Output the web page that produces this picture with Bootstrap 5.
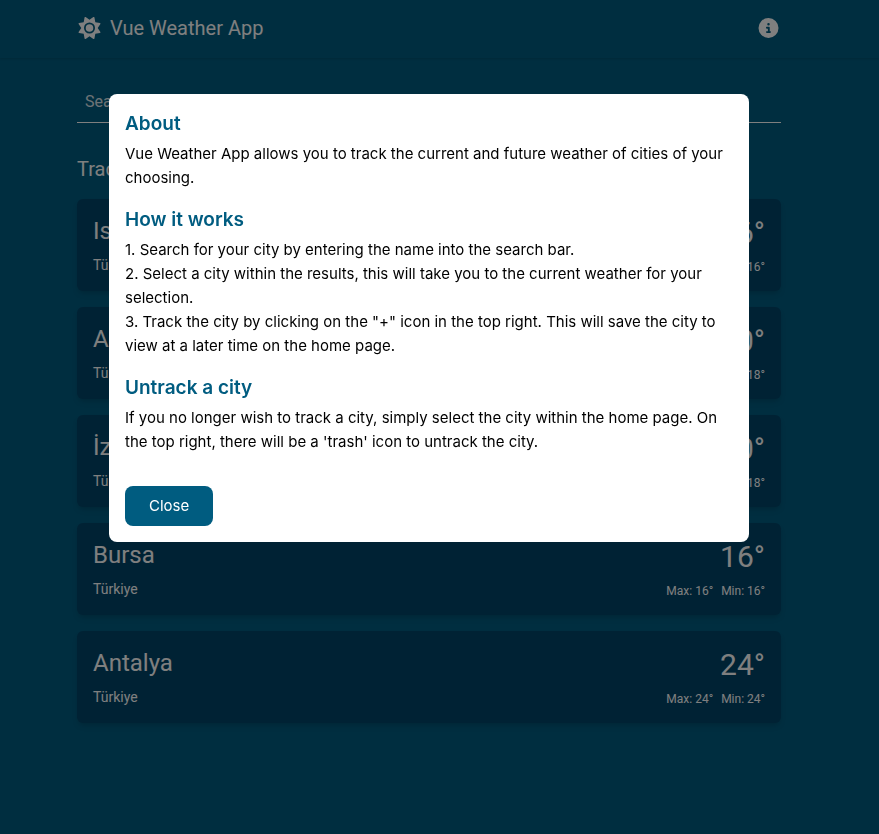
<!DOCTYPE html>
<html lang="en">
<head>
<meta charset="utf-8">
<meta name="viewport" content="width=device-width, initial-scale=1">
<title>Vue Weather App</title>
<link href="https://cdn.jsdelivr.net/npm/bootstrap@5.3.0/dist/css/bootstrap.min.css" rel="stylesheet">
<style>
:root { --sky: #005c80; --deep: #004468; }
body { min-height: 100vh; padding-right: 21px; background: var(--sky); color: #fff; font-family: Roboto, sans-serif; }
.page-width { max-width: 768px; padding-left: 32px; padding-right: 32px; }
.site-header { padding: 14px 0 16px; margin-right: -21px; padding-right: 21px; box-shadow: 0 1px 2px rgba(0,0,0,.12); }
.brand-link { font-size: 20px; line-height: 28px; font-weight: 400; }
.search-input, .search-input:focus { background: transparent; border: 0; border-bottom: 1px solid #fff; border-radius: 0; color: #fff; padding: 8px; line-height: 24px; box-shadow: none; }
.search-input::placeholder { color: #fff; opacity: .85; }
.list-title { font-size: 20px; line-height: 28px; font-weight: 400; margin: 32px 0 16px; }
.city-card { background: var(--deep); border-radius: 6px; padding: 16px; box-shadow: 0 4px 6px -1px rgba(0,0,0,.1), 0 2px 4px -2px rgba(0,0,0,.1); }
.city-name { font-size: 24px; line-height: 32px; font-weight: 400; }
.city-country { font-size: 14px; line-height: 20px; }
.city-temp { font-size: 30px; line-height: 36px; }
.city-range { font-size: 12px; line-height: 16px; }
.overlay { background: rgba(0,0,0,.5); padding: 94px 21px 32px 0; }
.about-box { max-width: 640px; padding: 16px; border-radius: 8px; border: 0; color: #000; font-family: Inter, sans-serif; font-size: 15px; line-height: 24px; }
.about-title { color: var(--sky); font-size: 19px; line-height: 28px; font-weight: 600; }
.close-btn, .close-btn:hover { background: var(--sky); color: #fff; border: 0; border-radius: 8px; padding: 8px 24px; margin-top: 32px; font-size: 15px; line-height: 24px; }
</style>
</head>
<body>
<header class="site-header">
  <nav class="container page-width d-flex align-items-center justify-content-between" aria-label="Main">
    <a href="#" class="brand-link d-flex align-items-center text-white text-decoration-none">
      <svg class="me-2" width="25" height="22" viewBox="0 0 512 512" fill="#fff" aria-hidden="true"><path d="M361.500 1.200c5 2.100 8.600 6.600 9.600 11.900L391 121l107.900 19.800c5.300 1 9.800 4.600 11.900 9.600s1.500 10.700-1.600 15.200L446.900 256l62.300 90.300c3.100 4.500 3.700 10.200 1.600 15.200s-6.600 8.600-11.900 9.600L391 391 371.100 498.900c-1 5.300-4.600 9.800-9.600 11.900s-10.700 1.500-15.200-1.600L256 446.900l-90.300 62.300c-4.500 3.100-10.200 3.700-15.200 1.600s-8.600-6.600-9.600-11.900L121 391 13.100 371.100c-5.300-1-9.800-4.600-11.900-9.600s-1.500-10.700 1.600-15.200L65.100 256 2.800 165.700c-3.100-4.500-3.700-10.200-1.600-15.200s6.600-8.600 11.900-9.600L121 121 140.900 13.100c1-5.300 4.600-9.800 9.600-11.900s10.700-1.500 15.200 1.600L256 65.100 346.300 2.800c4.500-3.100 10.200-3.700 15.200-1.600zM168 256a88 88 0 1 1 176 0 88 88 0 1 1-176 0zm216 0a128 128 0 1 0-256 0 128 128 0 1 0 256 0z"/></svg>
      Vue Weather App
    </a>
    <button type="button" class="btn p-0 border-0 d-flex" aria-label="About this app">
      <svg width="25" height="20" viewBox="0 0 512 512" fill="#fff" aria-hidden="true"><path d="M256 512A256 256 0 1 0 256 0a256 256 0 1 0 0 512zM216 336h24V272H216c-13.300 0-24-10.700-24-24s10.700-24 24-24h48c13.300 0 24 10.700 24 24v88h8c13.300 0 24 10.700 24 24s-10.700 24-24 24H216c-13.300 0-24-10.700-24-24s10.700-24 24-24zm40-208a32 32 0 1 1 0 64 32 32 0 1 1 0-64z"/></svg>
    </button>
  </nav>
</header>
<main class="container page-width pt-4 pb-4">
  <input type="search" class="form-control search-input" placeholder="Search for a city or state" aria-label="Search for a city or state">
  <h2 class="list-title">Tracked Cities</h2>
  <div class="d-flex flex-column gap-3">
    <a href="#" class="city-card d-flex justify-content-between text-white text-decoration-none">
      <div class="d-flex flex-column gap-2"><h3 class="city-name m-0">Istanbul</h3><span class="city-country">Türkiye</span></div>
      <div class="d-flex flex-column gap-2 text-end"><span class="city-temp">16°</span><span class="city-range d-flex gap-2"><span>Max: 16°</span><span>Min: 16°</span></span></div>
    </a>
    <a href="#" class="city-card d-flex justify-content-between text-white text-decoration-none">
      <div class="d-flex flex-column gap-2"><h3 class="city-name m-0">Ankara</h3><span class="city-country">Türkiye</span></div>
      <div class="d-flex flex-column gap-2 text-end"><span class="city-temp">20°</span><span class="city-range d-flex gap-2"><span>Max: 20°</span><span>Min: 18°</span></span></div>
    </a>
    <a href="#" class="city-card d-flex justify-content-between text-white text-decoration-none">
      <div class="d-flex flex-column gap-2"><h3 class="city-name m-0">İzmir</h3><span class="city-country">Türkiye</span></div>
      <div class="d-flex flex-column gap-2 text-end"><span class="city-temp">20°</span><span class="city-range d-flex gap-2"><span>Max: 20°</span><span>Min: 18°</span></span></div>
    </a>
    <a href="#" class="city-card d-flex justify-content-between text-white text-decoration-none">
      <div class="d-flex flex-column gap-2"><h3 class="city-name m-0">Bursa</h3><span class="city-country">Türkiye</span></div>
      <div class="d-flex flex-column gap-2 text-end"><span class="city-temp">16°</span><span class="city-range d-flex gap-2"><span>Max: 16°</span><span>Min: 16°</span></span></div>
    </a>
    <a href="#" class="city-card d-flex justify-content-between text-white text-decoration-none">
      <div class="d-flex flex-column gap-2"><h3 class="city-name m-0">Antalya</h3><span class="city-country">Türkiye</span></div>
      <div class="d-flex flex-column gap-2 text-end"><span class="city-temp">24°</span><span class="city-range d-flex gap-2"><span>Max: 24°</span><span>Min: 24°</span></span></div>
    </a>
  </div>
</main>
<div class="overlay modal d-block" role="dialog" aria-modal="true" aria-labelledby="about-heading">
  <div class="modal-content about-box mx-auto">
    <h1 class="about-title mb-1" id="about-heading">About</h1>
    <p class="mb-3">Vue Weather App allows you to track the current and future weather of cities of your choosing.</p>
    <h2 class="about-title mb-1">How it works</h2>
    <ol class="list-unstyled mb-3">
      <li>1. Search for your city by entering the name into the search bar.</li>
      <li>2. Select a city within the results, this will take you to the current weather for your selection.</li>
      <li>3. Track the city by clicking on the "+" icon in the top right. This will save the city to view at a later time on the home page.</li>
    </ol>
    <h2 class="about-title mb-1">Untrack a city</h2>
    <p class="mb-0">If you no longer wish to track a city, simply select the city within the home page. On the top right, there will be a 'trash' icon to untrack the city.</p>
    <button type="button" class="btn close-btn align-self-start">Close</button>
  </div>
</div>
<script src="https://cdn.jsdelivr.net/npm/bootstrap@5.3.0/dist/js/bootstrap.bundle.min.js"></script>
</body>
</html>
